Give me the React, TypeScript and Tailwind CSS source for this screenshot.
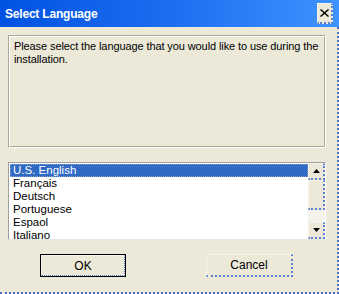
import React from "react";

const items = ["U.S. English", "Français", "Deutsch", "Portuguese", "Espaol", "Italiano"];

export default function App() {
  return (
    <div
      className="relative w-[339px] h-[294px] bg-[#ECE9D8] overflow-hidden flex flex-col"
      style={{ fontFamily: '"Liberation Sans", Arial, sans-serif' }}
    >
      {/* Title bar */}
      <div className="h-[27px] shrink-0 flex items-center justify-between pl-[5px] pr-[6px] bg-gradient-to-r from-[#0053E2] via-[#1D6DF0] to-[#3E93FF]">
        <span className="text-white font-bold text-[12px] tracking-[-0.2px] leading-none mt-[1px]">Select Language</span>
        <div className="w-[16px] h-[21px] bg-[#ECE9D8] border-t border-l border-white border-r-2 border-b-2 border-r-[#5a7fd0] border-b-[#5a7fd0] border-dotted flex items-center justify-center">
          <svg width="9" height="8" viewBox="0 0 9 8">
            <path d="M1 0 L4.5 3 L8 0 L9 1 L5.5 4 L9 7 L8 8 L4.5 5 L1 8 L0 7 L3.5 4 L0 1 Z" fill="#000" />
          </svg>
        </div>
      </div>

      {/* Body */}
      <div className="flex-1 flex flex-col pl-[8px] pr-[11px] pt-[8px] border-r-2 border-b-2 border-dotted border-r-[#4a6fc8] border-b-[#4a6fc8]">
        {/* Group box */}
        <div className="h-[113px] border border-t-[#aca899] border-l-[#aca899] border-r-white border-b-white">
          <div className="h-full border border-t-white border-l-white border-r-[#aca899] border-b-[#aca899] pl-[4px] pt-[3px] text-[11px] tracking-[-0.1px] leading-[13px] text-black whitespace-nowrap overflow-hidden">
            Please select the language that you would like to use during the
            <br />
            installation.
          </div>
        </div>

        {/* List box */}
        <div className="mt-[14px] h-[78px] bg-white border border-[#a0a0a0] border-r-white border-b-[#e8e8e8] flex">
          <div className="flex-1 overflow-hidden pl-[1px] pt-[1px]">
            {items.map((it, i) => (
              <div
                key={it}
                className={
                  "h-[13px] leading-[13px] text-[11.5px] pl-[3px] " +
                  (i === 0 ? "bg-[#316AC5] text-white outline outline-1 outline-dotted outline-[#8aa0c8] -outline-offset-1" : "text-black")
                }
              >
                {it}
              </div>
            ))}
          </div>
          {/* Scrollbar */}
          <div className="w-[17px] flex flex-col">
            <div className="h-[17px] bg-[#ECE9D8] border-t border-l border-white border-r-2 border-b-2 border-dotted border-r-[#5a7fd0] border-b-[#5a7fd0] flex items-center justify-center">
              <svg width="7" height="4" viewBox="0 0 7 4"><path d="M3.5 0 L7 4 L0 4 Z" fill="#000" /></svg>
            </div>
            <div className="h-[30px] bg-[#ECE9D8] border-t border-l border-white border-r-2 border-b-2 border-dotted border-r-[#5a7fd0] border-b-[#5a7fd0]" />
            <div className="flex-1 bg-[#F4F2EA]" />
            <div className="h-[17px] bg-[#ECE9D8] border-t border-l border-white border-r-2 border-b-2 border-dotted border-r-[#5a7fd0] border-b-[#5a7fd0] flex items-center justify-center">
              <svg width="7" height="4" viewBox="0 0 7 4"><path d="M0 0 L7 0 L3.5 4 Z" fill="#000" /></svg>
            </div>
          </div>
        </div>

        {/* Buttons */}
        <div className="mt-[14px] flex pl-[32px]">
          <div className="w-[86px] h-[23px] border border-black">
            <div className="h-full border-t border-l border-white border-r border-b border-dotted border-r-[#5a7fd0] border-b-[#5a7fd0] flex items-center justify-center text-[12px] text-black">
              OK
            </div>
          </div>
          <div className="ml-[80px] w-[87px] h-[23px] border-t border-l border-white border-r-2 border-b-2 border-dotted border-r-[#5a7fd0] border-b-[#5a7fd0] flex items-center justify-center text-[12px] text-black">
            Cancel
          </div>
        </div>
      </div>
    </div>
  );
}
